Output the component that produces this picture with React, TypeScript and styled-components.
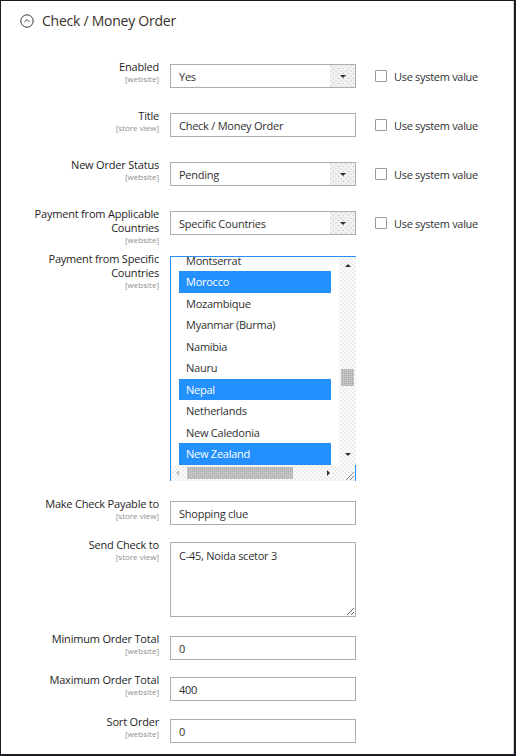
import React from 'react';
import styled, { createGlobalStyle, css } from 'styled-components';

const Global = createGlobalStyle`
  html, body { margin: 0; padding: 0; background: #fff; }
  body { font-family: "Open Sans", "Liberation Sans", sans-serif; color: #303030; }
  * { box-sizing: border-box; }
`;

const Frame = styled.div`
  width: 516px;
  height: 756px;
  border: 1px solid #1b1b24;
  border-right-width: 2px;
  border-bottom-width: 2px;
  box-shadow: inset -1px 0 0 #cfcfcf;
  overflow: hidden;
  display: flex;
  flex-direction: column;
`;

const Header = styled.div`
  display: flex;
  align-items: center;
  gap: 8px;
  height: 20px;
  margin-top: 10px;
  padding-left: 19px;
  font-size: 14px;
  letter-spacing: -0.25px;
  color: #3a302b;
  line-height: 20px;
`;

const Row = styled.div<{ $mt: number }>`
  display: grid;
  grid-template-columns: 158px 186px auto;
  column-gap: 11px;
  align-items: start;
  margin-top: ${p => p.$mt}px;
`;

const LabelCell = styled.div`
  text-align: right;
  display: flex;
  flex-direction: column;
  align-items: flex-end;
`;

const Label = styled.span`
  font-size: 11px;
  line-height: 14px;
  letter-spacing: -0.2px;
  color: #1e1e1e;
`;

const Scope = styled.span`
  font-size: 8px;
  line-height: 10px;
  color: #8e8e8e;
`;

const Control = styled.div`
  margin-top: 4px;
  width: 186px;
`;

const fieldBase = css`
  width: 186px;
  height: 24px;
  border: 1px solid #adadad;
  background: #fff;
  font-family: "Open Sans", "Liberation Sans", sans-serif;
  font-size: 11px;
  letter-spacing: -0.25px;
  color: #303030;
  padding: 0 8px;
  outline: none;
`;

const TextInput = styled.input`
  ${fieldBase};
  display: block;
`;

const TextArea = styled.textarea`
  ${fieldBase};
  display: block;
  height: 75px;
  padding: 5px 8px;
  line-height: 16px;
  resize: both;
`;

const dotted = css`
  background-color: #ececec;
  background-image:
    radial-gradient(circle, #ffffff 0.7px, transparent 0.8px),
    radial-gradient(circle, #ffffff 0.7px, transparent 0.8px);
  background-size: 4px 4px, 4px 4px;
  background-position: 0 0, 2px 2px;
`;

const Select = styled.div`
  ${fieldBase};
  display: flex;
  align-items: center;
  padding: 0 0 0 8px;
`;

const SelectText = styled.span`
  flex: 1;
`;

const ArrowBox = styled.span`
  width: 25px;
  height: 22px;
  display: flex;
  align-items: center;
  justify-content: center;
  background-color: #f1f1f1;
  background-image:
    radial-gradient(circle, #b9b9b9 0.6px, transparent 0.7px),
    radial-gradient(circle, #b9b9b9 0.6px, transparent 0.7px);
  background-size: 5px 5px, 5px 5px;
  background-position: 1px 1px, 3.5px 3.5px;
`;

const Tri = styled.span<{ $dir: 'up' | 'down' | 'left' | 'right'; $color?: string }>`
  width: 0;
  height: 0;
  ${p => {
    const c = p.$color || '#3b2a2a';
    switch (p.$dir) {
      case 'up':
        return `border-left: 3px solid transparent; border-right: 3px solid transparent; border-bottom: 3px solid ${c};`;
      case 'down':
        return `border-left: 3px solid transparent; border-right: 3px solid transparent; border-top: 3px solid ${c};`;
      case 'left':
        return `border-top: 3px solid transparent; border-bottom: 3px solid transparent; border-right: 3px solid ${c};`;
      default:
        return `border-top: 3px solid transparent; border-bottom: 3px solid transparent; border-left: 3px solid ${c};`;
    }
  }}
`;

const SysCell = styled.label`
  display: flex;
  align-items: center;
  gap: 7px;
  height: 24px;
  margin-top: 4px;
  padding-left: 8px;
  font-size: 11px;
  letter-spacing: -0.3px;
  color: #303030;
`;

const Box = styled.span`
  width: 12px;
  height: 12px;
  border: 1px solid #9a9a9a;
  border-radius: 1px;
  background: #fff;
`;

const Multi = styled.div`
  width: 186px;
  height: 225px;
  border-top: 1px solid #2b8ef8;
  border-left: 1px solid #2b8ef8;
  display: grid;
  grid-template-columns: 168px 17px;
  grid-template-rows: 208px 16px;
`;

const List = styled.div`
  overflow: hidden;
  padding: 0 8px;
`;

const ListInner = styled.div`
  margin-top: -7.5px;
`;

const Option = styled.div<{ $selected?: boolean }>`
  height: 21.5px;
  line-height: 21.5px;
  padding-left: 7px;
  font-size: 11px;
  letter-spacing: -0.25px;
  color: ${p => (p.$selected ? '#ffffff' : '#303030')};
  background: ${p => (p.$selected ? '#2390fd' : 'transparent')};
`;

const VScroll = styled.div`
  ${dotted};
  position: relative;
  display: flex;
  flex-direction: column;
  align-items: center;
  justify-content: space-between;
  padding: 7px 0 9px;
`;

const thumb = css`
  background-color: #a9a9a9;
  background-image:
    linear-gradient(90deg, #c4c4c4 1px, transparent 1px),
    linear-gradient(0deg, #c4c4c4 1px, transparent 1px);
  background-size: 2px 2px;
`;

const VThumb = styled.span`
  ${thumb};
  position: absolute;
  left: 2px;
  top: 112px;
  width: 13px;
  height: 17px;
`;

const HScroll = styled.div`
  ${dotted};
  position: relative;
  display: flex;
  align-items: center;
  justify-content: space-between;
  padding: 0 9px 0 5px;
`;

const HThumb = styled.span`
  ${thumb};
  position: absolute;
  left: 16px;
  top: 2px;
  width: 106px;
  height: 12px;
`;

const Corner = styled.div`
  ${dotted};
  border-right: 1px solid #2b8ef8;
  display: flex;
  align-items: flex-end;
  justify-content: flex-end;
`;

const countries: [string, boolean][] = [
  ['Montserrat', false],
  ['Morocco', true],
  ['Mozambique', false],
  ['Myanmar (Burma)', false],
  ['Namibia', false],
  ['Nauru', false],
  ['Nepal', true],
  ['Netherlands', false],
  ['New Caledonia', false],
  ['New Zealand', true],
];

const FieldLabel = ({ lines, scope }: { lines: string[]; scope: string }) => (
  <LabelCell>
    {lines.map(l => (
      <Label key={l}>{l}</Label>
    ))}
    <Scope>[{scope}]</Scope>
  </LabelCell>
);

const SysValue = () => (
  <SysCell>
    <Box />
    Use system value
  </SysCell>
);

const Dropdown = ({ value }: { value: string }) => (
  <Select>
    <SelectText>{value}</SelectText>
    <ArrowBox>
      <Tri $dir="down" />
    </ArrowBox>
  </Select>
);

export default function App() {
  return (
    <>
      <Global />
      <Frame>
        <Header>
          <svg width="14" height="14" viewBox="0 0 14 14">
            <circle cx="7" cy="7" r="6.2" fill="none" stroke="#41362f" strokeWidth="1" />
            <path d="M4.4 8.1 L7 5.5 L9.6 8.1" fill="none" stroke="#41362f" strokeWidth="1" />
          </svg>
          Check / Money Order
        </Header>

        <Row $mt={29}>
          <FieldLabel lines={['Enabled']} scope="website" />
          <Control>
            <Dropdown value="Yes" />
          </Control>
          <SysValue />
        </Row>

        <Row $mt={21}>
          <FieldLabel lines={['Title']} scope="store view" />
          <Control>
            <TextInput readOnly value="Check / Money Order" />
          </Control>
          <SysValue />
        </Row>

        <Row $mt={21}>
          <FieldLabel lines={['New Order Status']} scope="website" />
          <Control>
            <Dropdown value="Pending" />
          </Control>
          <SysValue />
        </Row>

        <Row $mt={21}>
          <FieldLabel lines={['Payment from Applicable', 'Countries']} scope="website" />
          <Control>
            <Dropdown value="Specific Countries" />
          </Control>
          <SysValue />
        </Row>

        <Row $mt={7}>
          <FieldLabel lines={['Payment from Specific', 'Countries']} scope="website" />
          <Control>
            <Multi>
              <List>
                <ListInner>
                  {countries.map(([name, sel]) => (
                    <Option key={name} $selected={sel}>
                      {name}
                    </Option>
                  ))}
                </ListInner>
              </List>
              <VScroll>
                <Tri $dir="up" />
                <VThumb />
                <Tri $dir="down" />
              </VScroll>
              <HScroll>
                <Tri $dir="left" $color="#bdbdbd" />
                <HThumb />
                <Tri $dir="right" />
              </HScroll>
              <Corner>
                <svg width="12" height="12" viewBox="0 0 12 12">
                  <path d="M3 11 L11 3 M7 11 L11 7" stroke="#6b6b6b" strokeWidth="0.8" />
                </svg>
              </Corner>
            </Multi>
          </Control>
        </Row>

        <Row $mt={16}>
          <FieldLabel lines={['Make Check Payable to']} scope="store view" />
          <Control>
            <TextInput readOnly value="Shopping clue" />
          </Control>
        </Row>

        <Row $mt={13}>
          <FieldLabel lines={['Send Check to']} scope="store view" />
          <Control>
            <TextArea readOnly value="C-45, Noida scetor 3" />
          </Control>
        </Row>

        <Row $mt={15}>
          <FieldLabel lines={['Minimum Order Total']} scope="website" />
          <Control>
            <TextInput readOnly value="0" />
          </Control>
        </Row>

        <Row $mt={13}>
          <FieldLabel lines={['Maximum Order Total']} scope="website" />
          <Control>
            <TextInput readOnly value="400" />
          </Control>
        </Row>

        <Row $mt={14}>
          <FieldLabel lines={['Sort Order']} scope="website" />
          <Control>
            <TextInput readOnly value="0" />
          </Control>
        </Row>
      </Frame>
    </>
  );
}
